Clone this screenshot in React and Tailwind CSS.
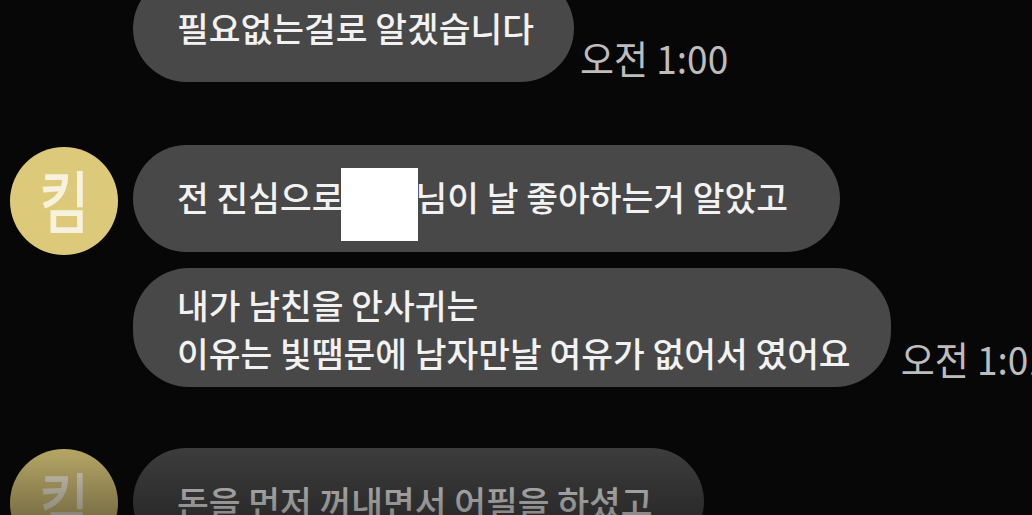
export default function App() {
  const font = { fontFamily: '"Noto Sans CJK KR", "Noto Sans", sans-serif' };
  const Avatar = () => (
    <div className="w-[108px] h-[108px] shrink-0 rounded-full bg-[#dcc97a] flex items-center justify-center">
      <span className="text-[68px] leading-none text-[#f7f2de] scale-x-[0.8] -mt-[4px]">킴</span>
    </div>
  );
  return (
    <div className="relative w-[1032px] h-[515px] overflow-hidden bg-[#070707] text-[#f2f2f2] font-medium" style={font}>
      <div className="flex flex-col -mt-[25px]">
        {/* row 1 */}
        <div className="flex items-end pl-[133px]">
          <div className="h-[107px] rounded-[54px] bg-[#484848] flex items-center pl-[44px] pr-[40px]">
            <span className="text-[34.5px] leading-none whitespace-nowrap -mt-[2px]">필요없는걸로 알겠습니다</span>
          </div>
          <span className="ml-[6px] mb-[6px] text-[37px] leading-none text-[#bdbdbd] font-normal whitespace-nowrap scale-y-[1.05]">오전 1:00</span>
        </div>

        {/* row 2 */}
        <div className="flex items-start pl-[10px] mt-[63px]">
          <div className="mt-[2px]"><Avatar /></div>
          <div className="ml-[15px] h-[107px] rounded-[54px] bg-[#484848] flex items-center pl-[44px] pr-[52px]">
            <span className="text-[34.5px] leading-none whitespace-nowrap">
              전 진심으로
              <span className="relative inline-block w-[72px] h-[1em] align-middle">
                <span className="absolute -left-[2px] -top-[16px] w-[77px] h-[73px] bg-white"></span>
              </span>
              님이 날 좋아하는거 알았고
            </span>
          </div>
        </div>

        {/* row 3 */}
        <div className="flex items-end pl-[133px] mt-[13px]">
          <div className="h-[119px] rounded-[56px] bg-[#484848] flex flex-col justify-center pl-[44px] pr-[40px]">
            <span className="text-[34.5px] leading-[48px] whitespace-nowrap">내가 남친을 안사귀는</span>
            <span className="text-[34.5px] leading-[48px] whitespace-nowrap">이유는 빛땜문에 남자만날 여유가 없어서 였어요</span>
          </div>
          <span className="ml-[10px] mb-[10px] text-[37px] leading-none text-[#bdbdbd] font-normal whitespace-nowrap scale-y-[1.05]">오전 1:01</span>
        </div>

        {/* row 4 */}
        <div className="flex items-start pl-[10px] mt-[61px]">
          <div className="mt-[1px]"><Avatar /></div>
          <div className="ml-[15px] h-[107px] rounded-[54px] bg-[#484848] flex items-center pl-[44px] pr-[52px]">
            <span className="text-[34.5px] leading-none whitespace-nowrap">돈을 먼저 꺼내면서 어필을 하셨고</span>
          </div>
        </div>
      </div>
      <div className="pointer-events-none absolute left-0 right-0 bottom-0 h-[110px] bg-gradient-to-b from-transparent to-[#070707]/45"></div>
    </div>
  );
}
